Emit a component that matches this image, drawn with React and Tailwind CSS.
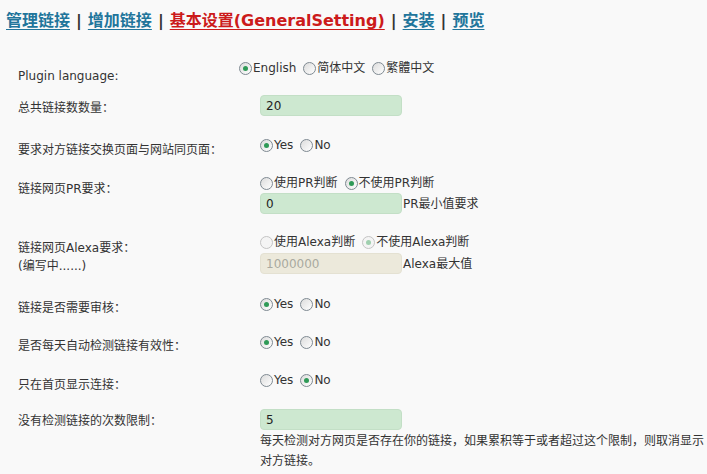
import { useState } from "react";

// 顶部导航
const navItems = [
  { label: "管理链接" },
  { label: "增加链接" },
  { label: "基本设置(GeneralSetting)", active: true },
  { label: "安装" },
  { label: "预览" },
];

function Radio({ checked, disabled, children }) {
  return (
    <span className="inline-flex items-center">
      <span
        className={`flex items-center justify-center w-[13px] h-[13px] rounded-full border mr-[1px] ${
          disabled
            ? "border-[#c4c4c4] bg-[#f4f4f4]"
            : "border-[#7f8a92] bg-gradient-to-br from-[#dcdcdc] to-[#ffffff]"
        }`}
      >
        {checked && (
          <span
            className={`w-[5px] h-[5px] rounded-full ${
              disabled ? "bg-[#9fcfae]" : "bg-[#2f9a57]"
            }`}
          />
        )}
      </span>
      <span>{children}</span>
    </span>
  );
}

function RadioGroup({ options, value, disabled }) {
  return (
    <div className="flex gap-[7px] leading-[16px]">
      {options.map((o) => (
        <Radio key={o} checked={o === value} disabled={disabled}>
          {o}
        </Radio>
      ))}
    </div>
  );
}

function Field({ value, disabled }) {
  return (
    <div
      className={`w-[142px] h-[21px] rounded-[4px] px-[5px] leading-[21px] border ${
        disabled
          ? "bg-[#ece9db] border-[#e4e1d2] text-[#a9a9a0]"
          : "bg-[#cde8d0] border-[#c3dfc6] text-[#222]"
      }`}
    >
      {value}
    </div>
  );
}

function Row({ height, labelWidth = "w-[260px]", labelPad, label, children }) {
  return (
    <div className={`flex ${height}`}>
      <div className={`${labelWidth} pl-[18px] ${labelPad} leading-[18px] shrink-0`}>
        {label}
      </div>
      <div>{children}</div>
    </div>
  );
}

export default function App() {
  const [lang] = useState("English");

  return (
    <div
      className="min-h-[474px] bg-[#f9f9f9] text-[#333] text-[12px]"
      style={{ fontFamily: '"DejaVu Sans", "Noto Sans CJK SC", sans-serif' }}
    >
      <div className="pt-[11px] pl-[6px] text-[16px] font-bold leading-[20px] flex gap-[6px]">
        {navItems.map((item, i) => (
          <span key={item.label} className="flex gap-[6px]">
            {i > 0 && <span className="text-[#333]">|</span>}
            <a
              href="#"
              className={`underline underline-offset-[3px] ${
                item.active ? "text-[#cc1b1b]" : "text-[#21759b]"
              }`}
            >
              {item.label}
            </a>
          </span>
        ))}
      </div>

      <div className="mt-[29px]">
        <Row height="h-[35px]" labelWidth="w-[239px]" labelPad="pt-[7px]" label="Plugin language:">
          <RadioGroup options={["English", "简体中文", "繁體中文"]} value={lang} />
        </Row>

        <Row height="h-[42px]" labelPad="pt-[4px]" label="总共链接数数量：">
          <Field value="20" />
        </Row>

        <Row height="h-[38px]" labelPad="pt-[4px]" label="要求对方链接交换页面与网站同页面：">
          <RadioGroup options={["Yes", "No"]} value="Yes" />
        </Row>

        <Row height="h-[59px]" labelPad="pt-[5px]" label="链接网页PR要求：">
          <RadioGroup options={["使用PR判断", "不使用PR判断"]} value="不使用PR判断" />
          <div className="flex items-center mt-[2px]">
            <Field value="0" />
            <span className="ml-[1px]">PR最小值要求</span>
          </div>
        </Row>

        <Row
          height="h-[62px]"
          labelPad="pt-[5px]"
          label={
            <>
              链接网页Alexa要求：
              <br />
              (编写中......)
            </>
          }
        >
          <RadioGroup
            options={["使用Alexa判断", "不使用Alexa判断"]}
            value="不使用Alexa判断"
            disabled
          />
          <div className="flex items-center mt-[3px]">
            <Field value="1000000" disabled />
            <span className="ml-[1px]">Alexa最大值</span>
          </div>
        </Row>

        <Row height="h-[38px]" labelPad="pt-[3px]" label="链接是否需要审核：">
          <RadioGroup options={["Yes", "No"]} value="Yes" />
        </Row>

        <Row height="h-[38px]" labelPad="pt-[3px]" label="是否每天自动检测链接有效性：">
          <RadioGroup options={["Yes", "No"]} value="Yes" />
        </Row>

        <Row height="h-[37px]" labelPad="pt-[4px]" label="只在首页显示连接：">
          <RadioGroup options={["Yes", "No"]} value="No" />
        </Row>

        <Row labelPad="pt-[3px]" label="没有检测链接的次数限制：">
          <Field value="5" />
          <p className="w-[446px] leading-[20px] mt-[1px]">
            每天检测对方网页是否存在你的链接，如果累积等于或者超过这个限制，则取消显示对方链接。
          </p>
        </Row>
      </div>
    </div>
  );
}
